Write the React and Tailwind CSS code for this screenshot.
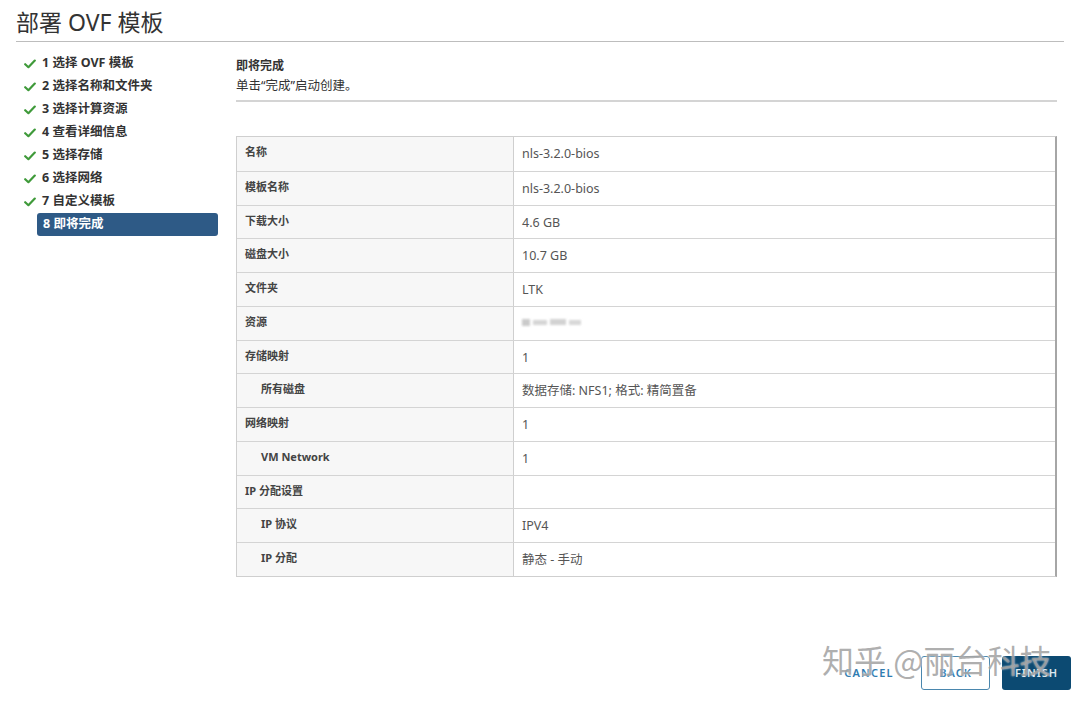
import React from "react";

const F = { fontFamily: '"Noto Sans", "Noto Sans CJK SC", sans-serif' };

const steps = [
  "1 选择 OVF 模板",
  "2 选择名称和文件夹",
  "3 选择计算资源",
  "4 查看详细信息",
  "5 选择存储",
  "6 选择网络",
  "7 自定义模板",
];

const rows = [
  ["名称", "nls-3.2.0-bios", false],
  ["模板名称", "nls-3.2.0-bios", false],
  ["下载大小", "4.6 GB", false],
  ["磁盘大小", "10.7 GB", false],
  ["文件夹", "LTK", false],
  ["资源", "__blur__", false],
  ["存储映射", "1", false],
  ["所有磁盘", "数据存储: NFS1;  格式: 精简置备", true],
  ["网络映射", "1", false],
  ["VM Network", "1", true],
  ["IP 分配设置", "", false],
  ["IP 协议", "IPV4", true],
  ["IP 分配", "静态 - 手动", true],
];

function Check() {
  return (
    <svg width="12" height="10" viewBox="0 0 12 10" className="shrink-0">
      <path d="M1.2 5.2 L4.4 8.2 L10.8 1.6" fill="none" stroke="#3f9a3a" strokeWidth="2.2" strokeLinecap="round" strokeLinejoin="round" />
    </svg>
  );
}

export default function App() {
  return (
    <div className="relative w-[1080px] h-[706px] bg-white overflow-hidden text-[#333]" style={F}>
      <div className="mx-[16px] h-[42px] border-b border-[#bdbdbd] pt-[8px]">
        <div className="text-[23px] leading-[28px] text-[#333] font-normal">部署 OVF 模板</div>
      </div>

      <div className="flex pl-[16px]">
        <div className="w-[220px] pt-[10px] flex flex-col">
          {steps.map((s) => (
            <div key={s} className="h-[23px] flex items-center pl-[8px] gap-[6px]">
              <Check />
              <span className="text-[12.5px] font-bold text-[#333]">{s}</span>
            </div>
          ))}
          <div className="h-[23px] ml-[21px] w-[181px] flex items-center pl-[6px] bg-[#2e5a86] rounded-[3px]">
            <span className="text-[12.5px] font-bold text-white">8 即将完成</span>
          </div>
        </div>

        <div className="w-[821px] flex flex-col">
          <div className="pt-[15px] border-b-2 border-[#d4d4d4] pb-[5px]">
            <div className="text-[12px] leading-[18px] font-bold text-[#333]">即将完成</div>
            <div className="text-[12.5px] leading-[18px] mt-[2px] text-[#333]">单击“完成”启动创建。</div>
          </div>

          <div className="mt-[34px] border border-[#cfcfcf] border-r-2 border-r-[#a6a6a6]">
            {rows.map(([k, v, indent], i) => (
              <div key={k} className={"flex h-[33.75px] " + (i > 0 ? "border-t border-[#d4d4d4]" : "")}>
                <div className={"w-[277px] bg-[#f7f7f7] border-r border-[#cfcfcf] pt-[7px] text-[11px] font-bold text-[#444] " + (indent ? "pl-[24px]" : "pl-[8px]")}>
                  {k}
                </div>
                <div className="flex-1 pl-[8px] pt-[8px] text-[12.5px] text-[#555]">
                  {v === "__blur__" ? (
                    <div className="flex items-center gap-[3px] mt-[4px] blur-[1.2px] opacity-70">
                      <span className="w-[8px] h-[7px] bg-[#b5b5b5]" />
                      <span className="w-[14px] h-[5px] bg-[#c4c4c4]" />
                      <span className="w-[16px] h-[6px] bg-[#c0c0c0]" />
                      <span className="w-[12px] h-[5px] bg-[#c8c8c8]" />
                    </div>
                  ) : (
                    v
                  )}
                </div>
              </div>
            ))}
          </div>
        </div>
      </div>

      <div className="flex justify-end items-center pr-[9px] mt-[79px]">
        <button className="w-[76px] h-[34px] text-[11px] tracking-[1.2px] text-[#2f7bb0] font-semibold mr-[14px]">CANCEL</button>
        <button className="w-[69px] h-[34px] border border-[#4a87ae] rounded-[3px] text-[11px] tracking-[1px] text-[#2f7bb0] font-semibold mr-[12px]">BACK</button>
        <button className="w-[69px] h-[34px] bg-[#0c4a72] rounded-[3px] text-[11px] tracking-[1px] text-[#dfe7ee] font-semibold">FINISH</button>
      </div>

      <div
        className="absolute left-[822px] top-[639px] text-[32px] leading-[40px] text-[#8c8c8c]/70 whitespace-nowrap pointer-events-none"
        style={{ fontFamily: '"Noto Sans CJK SC", sans-serif', textShadow: "0 0 2px rgba(255,255,255,0.9)" }}
      >
        知乎 @丽台科技
      </div>
    </div>
  );
}
